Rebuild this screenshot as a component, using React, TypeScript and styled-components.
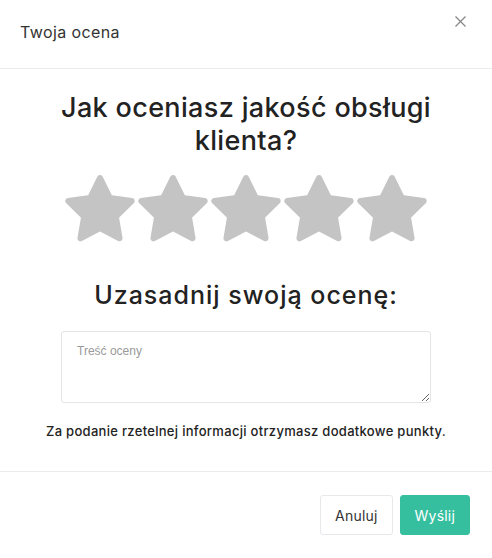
import styled, { createGlobalStyle } from 'styled-components';

const Global = createGlobalStyle`
  body {
    margin: 0;
    background: #fff;
    font-family: Inter, "Open Sans", "Liberation Sans", sans-serif;
  }
`

const Modal = styled.div`
  width: 492px;
  height: 558px;
  display: flex;
  flex-direction: column;
  background: #fff;
`

const Header = styled.div`
  height: 69px;
  box-sizing: border-box;
  border-bottom: 1px solid #e9ecef;
  display: flex;
  align-items: flex-start;
  justify-content: space-between;
  padding: 21px 24px 0 20px;
`

const HeaderTitle = styled.h5`
  margin: 0;
  font-size: 16px;
  font-weight: 400;
  letter-spacing: 0.4px;
  color: #333;
  line-height: 22px;
`

const CloseButton = styled.button`
  border: 0;
  background: none;
  padding: 0;
  margin-top: -10px;
  width: 16px;
  height: 20px;
  display: flex;
  align-items: center;
  justify-content: center;
  cursor: pointer;
`

const Body = styled.div`
  flex: 1;
  display: flex;
  flex-direction: column;
  align-items: center;
  padding: 22px 40px 0;
  border-bottom: 1px solid #e9ecef;
`

const Question = styled.h2`
  margin: 0;
  font-size: 27px;
  font-weight: 500;
  letter-spacing: 0.35px;
  line-height: 33px;
  color: #222;
  text-align: center;
`

const Stars = styled.div`
  display: flex;
  gap: 3px;
  margin-top: 17px;
`

const SubHeading = styled.h3`
  margin: 38px 0 0;
  font-size: 25px;
  font-weight: 500;
  letter-spacing: 1px;
  color: #222;
  line-height: 31px;
`

const TextArea = styled.textarea`
  margin-top: 20px;
  width: 370px;
  height: 72px;
  box-sizing: border-box;
  border: 1px solid #e3e5e8;
  border-radius: 3px;
  padding: 12px 15px;
  font-family: "Liberation Sans", Arial, sans-serif;
  font-size: 12px;
  color: #333;
  resize: vertical;
  &::placeholder {
    color: #9a9a9a;
  }
`

const Note = styled.p`
  margin: 20px 0 0;
  font-size: 13px;
  font-weight: 500;
  letter-spacing: 0.3px;
  color: #222;
  white-space: nowrap;
`

const Footer = styled.div`
  height: 86px;
  display: flex;
  align-items: center;
  justify-content: flex-end;
  gap: 7px;
  padding: 0 22px 0 0;
`

const Button = styled.button<{ $primary?: boolean }>`
  height: 40px;
  padding: 0 14px;
  border-radius: 3px;
  font-family: Inter, "Open Sans", sans-serif;
  font-size: 14px;
  letter-spacing: 0.2px;
  border: 1px solid ${p => (p.$primary ? '#35bf9f' : '#e6e8eb')};
  background: ${p => (p.$primary ? '#35bf9f' : '#fff')};
  color: ${p => (p.$primary ? '#fff' : '#333')};
  cursor: pointer;
`

const Star = () => (
  <svg width="70" height="68" viewBox="1.6 1.4 20.8 20.2">
    <path
      fill="#c4c4c4"
      stroke="#c4c4c4"
      strokeWidth="1.8"
      strokeLinejoin="round"
      d="M12 2.6l2.9 5.9 6.5.95-4.7 4.58 1.1 6.47L12 17.45l-5.8 3.05 1.1-6.47-4.7-4.58 6.5-.95z"
    />
  </svg>
)

export default function App() {
  return (
    <Modal>
      <Global />
      <Header>
        <HeaderTitle>Twoja ocena</HeaderTitle>
        <CloseButton aria-label="Zamknij">
          <svg width="11" height="11" viewBox="0 0 11 11">
            <path d="M.5.5l10 10M10.5.5l-10 10" stroke="#888" strokeWidth="1.3" />
          </svg>
        </CloseButton>
      </Header>
      <Body>
        <Question>Jak oceniasz jakość obsługi klienta?</Question>
        <Stars>
          {[1, 2, 3, 4, 5].map(i => (
            <Star key={i} />
          ))}
        </Stars>
        <SubHeading>Uzasadnij swoją ocenę:</SubHeading>
        <TextArea placeholder="Treść oceny" />
        <Note>Za podanie rzetelnej informacji otrzymasz dodatkowe punkty.</Note>
      </Body>
      <Footer>
        <Button>Anuluj</Button>
        <Button $primary>Wyślij</Button>
      </Footer>
    </Modal>
  );
}
